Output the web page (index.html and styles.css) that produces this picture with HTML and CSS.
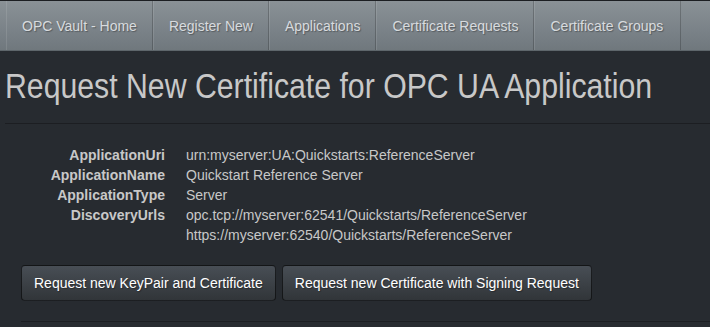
FILE: index.html
```html
<!DOCTYPE html>
<html lang="en">
<head>
<meta charset="utf-8">
<title>Request New Certificate</title>
<link rel="stylesheet" href="styles.css">
</head>
<body>
<nav class="navbar">
  <ul class="nav">
    <li><a class="nav-link" href="#">OPC Vault - Home</a></li>
    <li><a class="nav-link" href="#">Register New</a></li>
    <li><a class="nav-link" href="#">Applications</a></li>
    <li><a class="nav-link" href="#">Certificate Requests</a></li>
    <li><a class="nav-link" href="#">Certificate Groups</a></li>
  </ul>
</nav>
<main class="content">
  <h1 class="title"><span class="title-text">Request New Certificate for OPC UA Application</span></h1>
  <hr class="rule">
  <dl class="details">
    <dt>ApplicationUri</dt>
    <dd>urn:myserver:UA:Quickstarts:ReferenceServer</dd>
    <dt>ApplicationName</dt>
    <dd>Quickstart Reference Server</dd>
    <dt>ApplicationType</dt>
    <dd>Server</dd>
    <dt>DiscoveryUrls</dt>
    <dd>opc.tcp://myserver:62541/Quickstarts/ReferenceServer<br>https://myserver:62540/Quickstarts/ReferenceServer</dd>
  </dl>
  <div class="actions">
    <div class="btn-row">
      <button class="btn">Request new KeyPair and Certificate</button>
      <button class="btn">Request new Certificate with Signing Request</button>
    </div>
    <hr class="rule rule-bottom">
  </div>
</main>
</body>
</html>
```

FILE: styles.css
```css
html, body {
  margin: 0;
  padding: 0;
}
body {
  background: #272b30;
  color: #c8c8c8;
  font-family: "Liberation Sans", Arial, sans-serif;
  font-size: 14px;
  line-height: 20px;
  overflow: hidden;
}
.navbar {
  height: 49px;
  border-top: 1px solid #1c1e22;
  border-bottom: 1px solid #5e666b;
  background-image: linear-gradient(#8a9196, #7a8288 60%, #70787d);
}
.nav {
  list-style: none;
  margin: 0;
  padding: 0 0 0 6px;
  display: flex;
  height: 100%;
}
.nav li {
  display: flex;
}
.nav-link {
  display: flex;
  align-items: center;
  padding: 0 15px;
  color: #d8dbde;
  text-decoration: none;
  text-shadow: 1px 1px 1px rgba(0, 0, 0, 0.3);
  border-left: 1px solid rgba(255, 255, 255, 0.1);
  border-right: 1px solid rgba(0, 0, 0, 0.2);
}
.nav li:last-child .nav-link {
  padding-right: 17px;
}
.content {
  padding: 0 0 0 5px;
}
.title {
  margin: 0;
  padding-top: 15px;
  font-size: 35px;
  font-weight: normal;
  line-height: 40px;
  color: #c8c8c8;
  white-space: nowrap;
  overflow: hidden;
}
.title-text {
  display: inline-block;
  transform: scaleX(0.864);
  transform-origin: left center;
}
.rule {
  margin: 17px 0 0;
  border: 0;
  border-top: 1px solid #1c1e22;
  height: 0;
}
.details {
  margin: 21px 0 0;
  display: grid;
  grid-template-columns: 160px 1fr;
  column-gap: 21px;
}
.details dt {
  font-weight: bold;
  text-align: right;
}
.details dd {
  margin: 0;
}
.actions {
  padding-left: 16px;
}
.btn-row {
  display: flex;
  gap: 6px;
  margin-top: 20px;
}
.btn {
  font-family: inherit;
  font-size: 14px;
  line-height: 20px;
  padding: 7px 12px;
  color: #ffffff;
  border: 1px solid rgba(0, 0, 0, 0.6);
  border-radius: 4px;
  background-image: linear-gradient(#484e55, #3a3f44 60%, #313539);
  text-shadow: 1px 1px 1px rgba(0, 0, 0, 0.3);
  cursor: pointer;
}
.rule-bottom {
  margin-top: 20px;
}
```
